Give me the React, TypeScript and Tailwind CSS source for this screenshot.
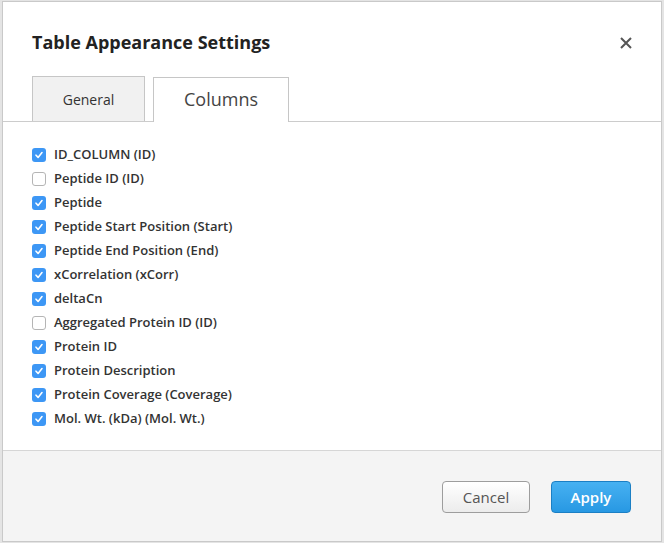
const columns = [
  { label: 'ID_COLUMN (ID)', checked: true },
  { label: 'Peptide ID (ID)', checked: false },
  { label: 'Peptide', checked: true },
  { label: 'Peptide Start Position (Start)', checked: true },
  { label: 'Peptide End Position (End)', checked: true },
  { label: 'xCorrelation (xCorr)', checked: true },
  { label: 'deltaCn', checked: true },
  { label: 'Aggregated Protein ID (ID)', checked: false },
  { label: 'Protein ID', checked: true },
  { label: 'Protein Description', checked: true },
  { label: 'Protein Coverage (Coverage)', checked: true },
  { label: 'Mol. Wt. (kDa) (Mol. Wt.)', checked: true },
];

function Checkbox({ checked }: { checked: boolean }) {
  if (!checked) {
    return <span className="w-[14px] h-[14px] rounded-[3px] border border-[#b5b5b5] bg-white shrink-0" />;
  }
  return (
    <span className="w-[14px] h-[14px] rounded-[3px] bg-[#3d97f5] shrink-0 flex items-center justify-center">
      <svg width="10" height="10" viewBox="0 0 10 10" fill="none">
        <path d="M2 5.2 L4.1 7.4 L8 2.6" stroke="white" strokeWidth="1.6" strokeLinecap="round" strokeLinejoin="round" />
      </svg>
    </span>
  );
}

export default function App() {
  return (
    <div className="w-[664px] h-[543px] bg-[#e4e4e4] pt-[1px] pl-[2px]" style={{ fontFamily: '"Open Sans", sans-serif' }}>
      <div className="w-[660px] h-[541px] border border-[#c9c9c9] bg-white flex flex-col">
        {/* Header */}
        <div className="flex items-start justify-between pl-[29px] pr-[29px] pt-[28px] h-[75px]">
          <h2 className="text-[18px] leading-[24px] font-bold text-[#222]">Table Appearance Settings</h2>
          <svg width="12" height="12" viewBox="0 0 12 12" className="mt-[7px]">
            <path d="M1 1 L11 11 M11 1 L1 11" stroke="#555" strokeWidth="2" />
          </svg>
        </div>

        {/* Tabs */}
        <div className="flex items-end gap-[8px] pl-[29px] border-b border-[#cccccc] h-[45px]">
          <div className="w-[113px] h-[45px] bg-[#f1f1f1] border border-b-0 border-[#c6c6c6] flex items-center justify-center text-[14px] text-[#333]">
            General
          </div>
          <div className="w-[136px] h-[45px] bg-white border border-b-0 border-[#c6c6c6] -mb-px pb-px flex items-center justify-center text-[18px] text-[#444]">
            Columns
          </div>
        </div>

        {/* Column list */}
        <div className="flex flex-col pt-[21px] pb-[19px] pl-[29px] border-b border-[#d6d6d6]">
          {columns.map((c) => (
            <label key={c.label} className="h-[24px] flex items-center gap-[8px]">
              <Checkbox checked={c.checked} />
              <span className="text-[13px] font-semibold text-[#333]">{c.label}</span>
            </label>
          ))}
        </div>

        {/* Footer */}
        <div className="flex-1 bg-[#f4f4f4] flex justify-end items-start gap-[21px] pt-[30px] pr-[30px]">
          <button className="w-[88px] h-[32px] rounded-[4px] border border-[#9d9d9d] bg-gradient-to-b from-white to-[#ececec] text-[15px] text-[#555]">
            Cancel
          </button>
          <button className="w-[80px] h-[32px] rounded-[4px] border border-[#1b7fc4] bg-gradient-to-b from-[#46b1f2] to-[#2798e3] text-[15px] font-semibold text-white">
            Apply
          </button>
        </div>
      </div>
    </div>
  );
}
